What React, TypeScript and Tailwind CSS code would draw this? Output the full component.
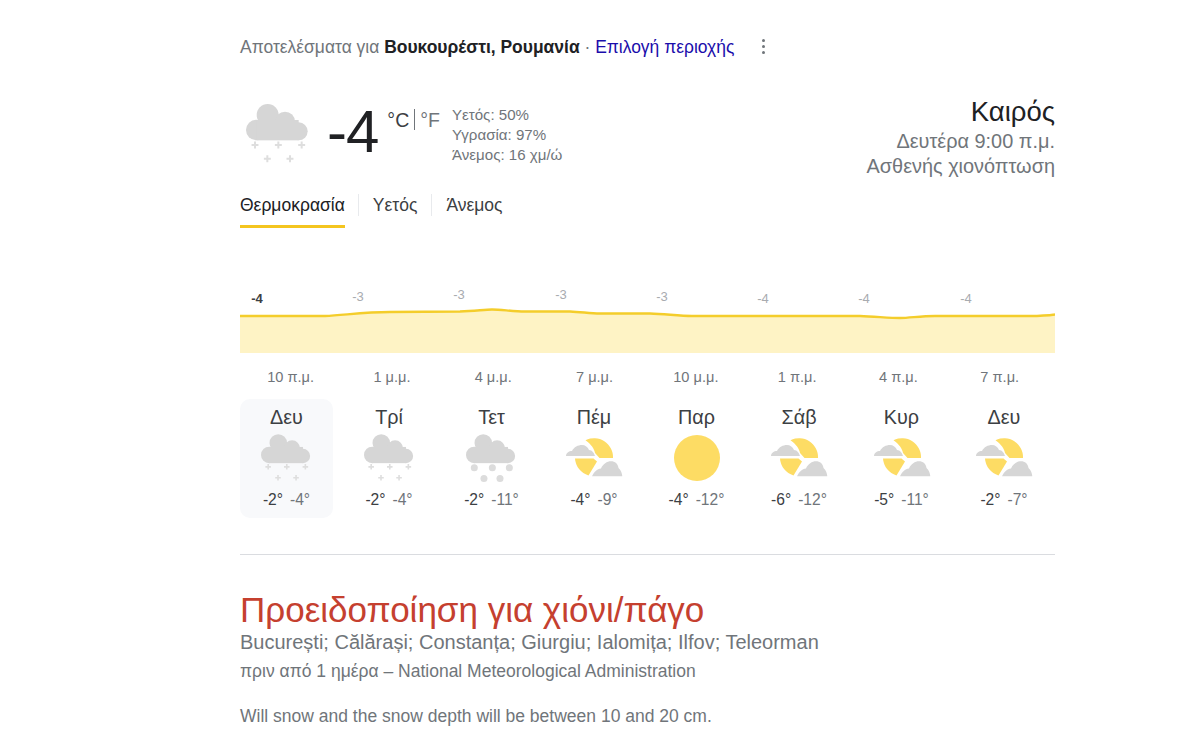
const font = { fontFamily: '"Liberation Sans", Arial, sans-serif' };

function Cloud() {
  return (
    <g fill="#d6d6d6">
      <circle cx="16.25" cy="11.25" r="8.25" />
      <circle cx="29.25" cy="16.25" r="7.5" />
      <circle cx="7.75" cy="22.5" r="7.75" />
      <circle cx="39.5" cy="23.5" r="6.75" />
      <rect x="8" y="15" width="31.5" height="15.25" />
    </g>
  );
}

function Plus({ x, y }: { x: number; y: number }) {
  return (
    <path
      d={`M${x - 2.6} ${y} H${x + 2.6} M${x} ${y - 2.6} V${y + 2.6}`}
      stroke="#dedede"
      strokeWidth="1.5"
    />
  );
}

const plusPts = [
  [6.75, 33.75],
  [24.25, 33.75],
  [41.75, 33.75],
  [16, 44],
  [33, 44],
];

const dotPts = [
  [7.8, 34.5],
  [24.8, 34.5],
  [40.8, 34.5],
  [16.9, 44.6],
  [32, 44.6],
];

function SnowIcon({ size = 51, big = false }: { size?: number; big?: boolean }) {
  return (
    <svg width={size} height={size} viewBox="0 0 48 48" className="block">
      <Cloud />
      {big
        ? dotPts.map(([x, y]) => <circle key={`${x}-${y}`} cx={x} cy={y} r="3.3" fill="#dcdcdc" />)
        : plusPts.map(([x, y]) => <Plus key={`${x}-${y}`} x={x} y={y} />)}
    </svg>
  );
}

function SunCloudIcon() {
  return (
    <svg width={60} height={48} viewBox="0 0 60 48" className="mt-[3px] block">
      <path d="M21.5 6.2 A19 19 0 0 1 49 24 H35.5 L31 19 C30.5 15 27 10 21.5 6.2 Z" fill="#fddc64" />
      <path d="M11 24.5 H29.5 L33 27.5 L24.5 41.5 A19 19 0 0 1 11 24.5 Z" fill="#fddc64" />
      <path
        d="M2 22 C2 19 5 17 8 17 C10 13 14 11 18 11 C21 11 24 13 25 16 C28 16 30 19 31 22 Z"
        fill="#d6d6d6"
      />
      <path
        d="M28 42.3 C30 38 33 35 37 34.5 C39 30 43 27.3 47 27.3 C51 27.3 54 30 54.5 34 C57 36 58 39 58.3 42.3 Z"
        fill="#d6d6d6"
      />
    </svg>
  );
}

function SunIcon() {
  return (
    <svg width={48} height={48} viewBox="0 0 48 48" className="mt-[3px] block">
      <circle cx="24" cy="24" r="23" fill="#fddc64" />
    </svg>
  );
}

const days = [
  { d: "Δευ", hi: "-2°", lo: "-4°", icon: "snow", active: true },
  { d: "Τρί", hi: "-2°", lo: "-4°", icon: "snow" },
  { d: "Τετ", hi: "-2°", lo: "-11°", icon: "heavy" },
  { d: "Πέμ", hi: "-4°", lo: "-9°", icon: "partly" },
  { d: "Παρ", hi: "-4°", lo: "-12°", icon: "sun" },
  { d: "Σάβ", hi: "-6°", lo: "-12°", icon: "partly" },
  { d: "Κυρ", hi: "-5°", lo: "-11°", icon: "partly" },
  { d: "Δευ", hi: "-2°", lo: "-7°", icon: "partly" },
];

const linePts =
  "M0 76 L85 76 C105 75 125 72 150 72 L220 71.5 C235 71 245 69.5 252 69.5 C262 69.5 272 71.5 285 71.5 L330 71.5 C342 72 350 73.5 360 73.5 L410 73.5 C425 74 440 76 452 76 L620 76 C635 76.5 650 78 660 78 C670 78 680 76 695 76 L790 76 C800 76 808 75.5 815 74.5";

const labels = [
  { x: 17, y: 63, t: "-4", dark: true },
  { x: 118, y: 61, t: "-3" },
  { x: 219, y: 59, t: "-3" },
  { x: 321, y: 59, t: "-3" },
  { x: 422, y: 61, t: "-3" },
  { x: 523, y: 63, t: "-4" },
  { x: 624, y: 63, t: "-4" },
  { x: 726, y: 63, t: "-4" },
];

const times = ["10 π.μ.", "1 μ.μ.", "4 μ.μ.", "7 μ.μ.", "10 μ.μ.", "1 π.μ.", "4 π.μ.", "7 π.μ."];

export default function App() {
  return (
    <div style={font} className="h-[729px] w-[1202px] overflow-hidden bg-white pl-[240px]">
      <div className="w-[815px]">
        <div className="flex h-[94px] items-start pt-[36px]">
          <div className="whitespace-nowrap text-[17.47px] leading-[22px] text-[#70757a]">
            Αποτελέσματα για <b className="font-bold text-[#202124]">Βουκουρέστι, Ρουμανία</b>
            <span> · </span>
            <span className="text-[#1a0dab]">Επιλογή περιοχής</span>
          </div>
          <div className="ml-[28px] mt-[3px] flex flex-col gap-[3px]">
            <span className="h-[3px] w-[3px] rounded-full bg-[#70757a]" />
            <span className="h-[3px] w-[3px] rounded-full bg-[#70757a]" />
            <span className="h-[3px] w-[3px] rounded-full bg-[#70757a]" />
          </div>
        </div>

        <div className="flex h-[94px] items-start">
          <div className="ml-[6px] mt-[6px]">
            <SnowIcon size={64} />
          </div>
          <div className="ml-[17px] mt-[6px] text-[60px] leading-[64px] tracking-[-1px] text-[#202124]">-4</div>
          <div className="ml-[9px] mt-[13px] flex h-[26px] items-start text-[19.5px] leading-[26px] text-[#70757a]">
            <span className="text-[#3c4043]">°C</span>
            <span className="mx-[5px] mt-[2px] h-[21px] w-px bg-[#70757a]" />
            <span>°F</span>
          </div>
          <div className="ml-[12px] mt-[11px] whitespace-nowrap text-[15.1px] leading-[20px] text-[#70757a]">
            <div>Υετός: 50%</div>
            <div>Υγρασία: 97%</div>
            <div>Άνεμος: 16 χμ/ώ</div>
          </div>
          <div className="ml-auto text-right text-[#70757a]">
            <div className="mt-[2px] text-[27.5px] leading-[32px] text-[#202124]">Καιρός</div>
            <div className="text-[19.9px] leading-[26px]">Δευτέρα 9:00 π.μ.</div>
            <div className="text-[19.9px] leading-[25px]">Ασθενής χιονόπτωση</div>
          </div>
        </div>

        <div className="flex h-[40px] items-start text-[17.5px] text-[#202124]">
          <div className="h-[40px] border-b-[3px] border-[#f4c51f] pt-[6px] leading-[22px]">Θερμοκρασία</div>
          <div className="ml-[13px] mt-[6px] h-[22px] border-l border-[#e8eaed]" />
          <div className="px-[14px] pt-[6px] leading-[22px] text-[#3c4043]">Υετός</div>
          <div className="mt-[6px] h-[22px] border-l border-[#e8eaed]" />
          <div className="pl-[14px] pt-[6px] leading-[22px] text-[#3c4043]">Άνεμος</div>
        </div>

        <svg width={815} height={125} viewBox="0 0 815 125" className="mt-[12px] block">
          <path d={`${linePts} V113 H0 Z`} fill="#fef3c5" />
          <path d={linePts} fill="none" stroke="#f4cd2b" strokeWidth="2.4" />
          {labels.map((l) => (
            <text
              key={l.x}
              x={l.x}
              y={l.y}
              textAnchor="middle"
              fontSize="13"
              fontWeight={l.dark ? 700 : 400}
              fill={l.dark ? "#3c4043" : "#a8abb0"}
              fontFamily='"Liberation Sans", Arial, sans-serif'
            >
              {l.t}
            </text>
          ))}
        </svg>

        <div className="flex h-[34px] items-start pt-[3px] text-[14.6px] leading-[18px] text-[#70757a]">
          {times.map((t) => (
            <div key={t} className="w-[101.3px] text-center">
              {t}
            </div>
          ))}
        </div>

        <div className="flex gap-[9.5px]">
          {days.map((d, i) => (
            <div
              key={i}
              className={`flex h-[119px] w-[93px] flex-col items-center rounded-[10px] pt-[6px] ${
                d.active ? "bg-[#f8f9fb]" : ""
              }`}
            >
              <div className="text-[19.8px] leading-[24px] text-[#3c4043]">{d.d}</div>
              <div className="mt-[2px] flex h-[51px] items-center justify-center">
                {d.icon === "snow" && <SnowIcon />}
                {d.icon === "heavy" && <SnowIcon big />}
                {d.icon === "partly" && <SunCloudIcon />}
                {d.icon === "sun" && <SunIcon />}
              </div>
              <div className="mt-[8px] flex gap-[7px] whitespace-nowrap text-[15.6px] leading-[20px]">
                <span className="text-[#3c4043]">{d.hi}</span>
                <span className="text-[#70757a]">{d.lo}</span>
              </div>
            </div>
          ))}
        </div>

        <hr className="mt-[36px] border-0 border-t border-[#dadce0]" />

        <div className="mt-[35px] whitespace-nowrap text-[35px] leading-[40px] text-[#c5402f]">
          Προειδοποίηση για χιόνι/πάγο
        </div>
        <div className="whitespace-nowrap text-[20px] leading-[24px] text-[#70757a]">
          București; Călărași; Constanța; Giurgiu; Ialomița; Ilfov; Teleorman
        </div>
        <div className="mt-[6px] whitespace-nowrap text-[17.5px] leading-[22px] text-[#70757a]">
          πριν από 1 ημέρα – National Meteorological Administration
        </div>
        <div className="mt-[23px] whitespace-nowrap text-[17.5px] leading-[22px] text-[#70757a]">
          Will snow and the snow depth will be between 10 and 20 cm.
        </div>
      </div>
    </div>
  );
}
